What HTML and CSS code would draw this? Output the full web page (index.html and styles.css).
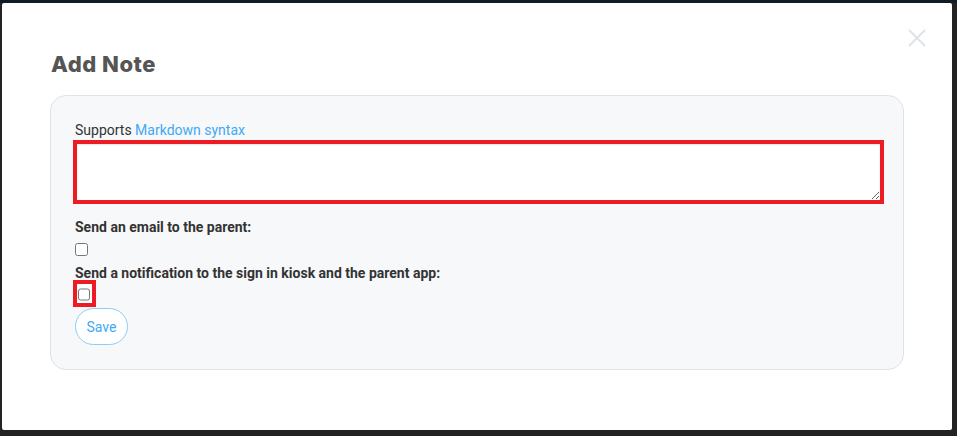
FILE: index.html
```html
<!DOCTYPE html>
<html>
<head>
<meta charset="utf-8">
<link rel="stylesheet" href="styles.css">
</head>
<body>
<div class="modal">
  <button class="close" aria-label="Close">
    <svg width="18" height="18" viewBox="0 0 18 18"><path d="M1 1L17 17M17 1L1 17" stroke="#dde3ea" stroke-width="2" fill="none"/></svg>
  </button>
  <h2 class="title">Add Note</h2>
  <div class="card">
    <div class="hint">Supports <a class="link" href="#">Markdown syntax</a></div>
    <textarea class="note"></textarea>
    <label class="field-label">Send an email to the parent:</label>
    <input type="checkbox" class="check">
    <label class="field-label field-label-2">Send a notification to the sign in kiosk and the parent app:</label>
    <span class="check-wrap"><input type="checkbox" class="check check-inner"></span>
    <button class="save">Save</button>
  </div>
</div>
</body>
</html>
```

FILE: styles.css
```css
html, body {
  margin: 0;
  padding: 0;
}
body {
  background: #232323;
  border-top: 3px solid #0f1b26;
  height: 433px;
  overflow: hidden;
  font-family: Roboto, "Liberation Sans", sans-serif;
}
.modal {
  position: relative;
  box-sizing: border-box;
  width: 950px;
  height: 427px;
  margin-left: 2px;
  background: #fff;
  border-radius: 2px;
  padding: 0 48px 0 48px;
  display: flow-root;
}
.close {
  position: absolute;
  top: 26px;
  left: 906px;
  border: 0;
  background: none;
  padding: 0;
  width: 18px;
  height: 18px;
}
.close svg { display: block; }
.title {
  margin: 48px 0 0 1px;
  font-family: Inter, "Open Sans", sans-serif;
  font-weight: 800;
  font-size: 22px;
  line-height: 26px;
  color: #555;
  letter-spacing: 0.5px;
}
.card {
  margin-top: 18px;
  box-sizing: border-box;
  width: 854px;
  background: #f7f8fa;
  border: 1px solid #dde3ea;
  border-radius: 16px;
  padding: 24px 24px 24px 24px;
  display: flex;
  flex-direction: column;
  align-items: flex-start;
}
.hint {
  font-size: 14px;
  line-height: 20px;
  color: #333;
}
.link {
  color: #3fa9f5;
  text-decoration: none;
}
.note {
  display: block;
  box-sizing: border-box;
  margin: 4px 0 0 2px;
  width: 803px;
  height: 56px;
  border: 0;
  background: #fff;
  box-shadow: inset 0 1px 2px rgba(0,0,0,0.1);
  outline: 4px solid #ed1c24;
  resize: both;
}
.field-label {
  margin-top: 17px;
  font-size: 14px;
  line-height: 20px;
  font-weight: 700;
  color: #333;
}
.field-label-2 {
  margin-top: 7px;
}
.check {
  margin: 6px 0 0 0;
  width: 13px;
  height: 13px;
}
.check-wrap {
  margin: -3px 0 0 -2px;
  box-sizing: border-box;
  width: 23px;
  height: 27px;
  border: 4px solid #ed1c24;
  background: #fff;
  display: flex;
  overflow: hidden;
}
.check-inner {
  margin: 4px 0 0 1px;
  width: 12px;
  height: 13px;
  flex: none;
}
.save {
  margin-top: 1px;
  box-sizing: border-box;
  height: 37px;
  width: 53px;
  border: 1px solid #8ccdf6;
  border-radius: 19px;
  background: #fff;
  color: #3fa9f5;
  font-family: Roboto, "Liberation Sans", sans-serif;
  font-size: 14px;
  padding: 0;
}
```
